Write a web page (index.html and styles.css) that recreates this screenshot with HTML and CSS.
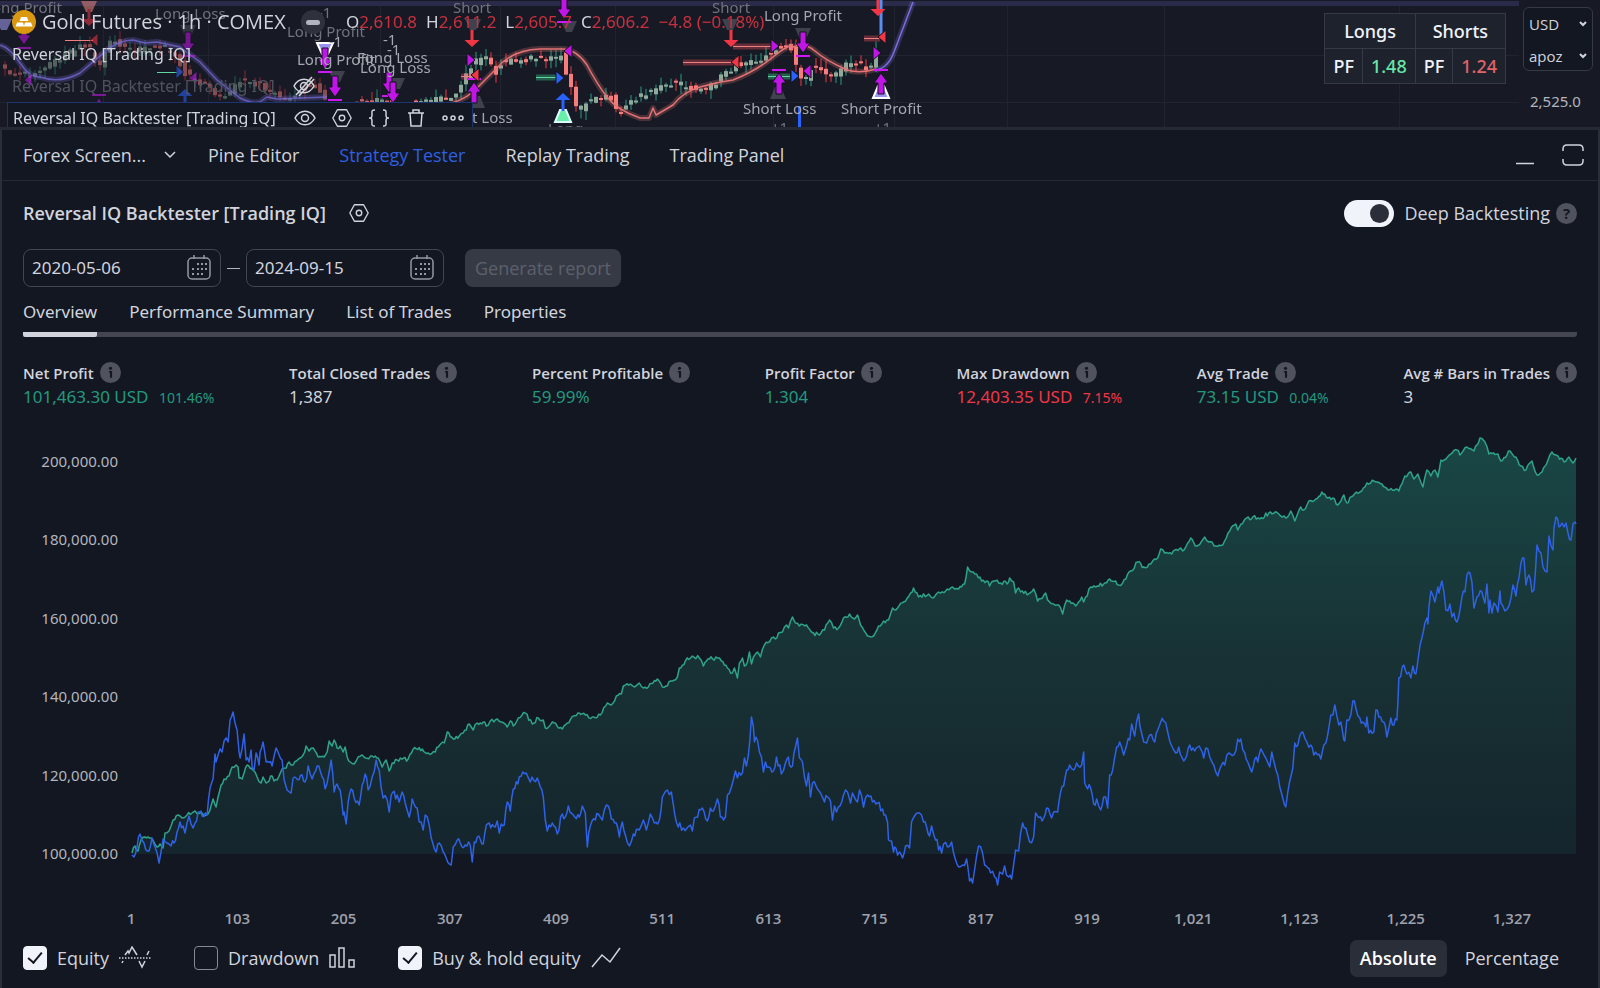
FILE: index.html
```html
<!DOCTYPE html>
<html lang="en">
<head>
<meta charset="utf-8">
<title>Strategy Tester</title>
<link rel="stylesheet" href="styles.css">
</head>
<body>
<svg class="defs" aria-hidden="true">
  <defs>
    <g id="exit-down"><path d="M-3 -22h6v11h4l-7 10-7-10h4z" fill="#c115e8" stroke="#10131c"/><path d="M-7 1h14v2h-14z" fill="#d016f5"/></g>
    <g id="exit-up"><path d="M-3 22h6v-11h4l-7-10-7 10h4z" fill="#c115e8" stroke="#10131c"/><path d="M-7 -3h14v2h-14z" fill="#d016f5"/></g>
    <path id="arrow-down" d="M-1.500 -16h3v10h6l-7.500 7-7.500-7h6z"/>
    <path id="arrow-up" d="M-1.500 18h3v-11h6l-7.500-7-7.500 7h6z"/>
    <path id="tri-left" d="M-4 0l8-7v14z" stroke="#10131c"/>
    <path id="tri-right" d="M4 0l-8-7v14z" stroke="#10131c"/>
    <path id="tag-down" d="M-8 -5h16l-5 11h-6z"/>
    <path id="tag-up" d="M-8 6h16l-5-12h-6z"/>
    <g id="hexagon" fill="none" stroke="currentColor" stroke-width="1.500"><path d="M7 3h10l5 9-5 9H7l-5-9z" stroke-linejoin="round"/><circle cx="12" cy="12" r="3"/></g>
    <g id="calendar"><rect x="2" y="3" width="22" height="21" rx="4" fill="none" stroke="currentColor" stroke-width="1.500"/><path d="M8 0v4M18 0v4" stroke="currentColor" stroke-width="1.500"/><path d="M11 8h2v2h-2zM15 8h2v2h-2zM19 8h2v2h-2zM6 13h2v2H6zM11 13h2v2h-2zM15 13h2v2h-2zM19 13h2v2h-2zM6 18h2v2H6zM11 18h2v2h-2zM15 18h2v2h-2z" fill="currentColor"/></g>
    <g id="info"><circle cx="10" cy="10" r="10" fill="#50535e"/><circle cx="10" cy="6" r="1.500" fill="#131722"/><path d="M8.500 8.500h3v6.500h-2v-5h-1z" fill="#131722"/></g>
  </defs>
</svg>

<header class="price">
  <svg class="price-chart" viewBox="0 0 1600 128" preserveAspectRatio="xMinYMin slice" aria-hidden="true">
    <rect x="0" y="1" width="1519" height="5" fill="#2a2b48"/>
    <path d="M0 55.500H1519M0 102.500H1519M103.500 6V128M208.500 6V128M380.500 6V128M500.500 6V128M615.500 6V128M773.500 6V128M894.500 6V128M1007.500 6V128M1164.500 6V128M1399.500 6V128" stroke="#20242f"/>
    <g id="candles"></g>
    <g fill="none" stroke-linejoin="round">
      <path class="ma-glow violet" d="M0 45Q10 48 20 63T40 77Q60 84 80 73L107 50Q120 40 133 40L145 43 157 42 180 47 200 62 217 80 240 98Q252 104 260 102L267 97 277 99 327 97"/>
      <path class="ma violet past" d="M0 45Q10 48 20 63T40 77Q60 84 80 73L107 50Q120 40 133 40L145 43 157 42 180 47 200 62 217 80 240 98Q252 104 260 102L267 97 277 99 327 97"/>
      <path class="ma-glow coral" d="M452 103Q468 98 477 88L497 68Q512 50 540 49H563Q577 50 587 65Q597 84 607 97T640 118H649L653 108 656 115 673 105Q683 92 700 87T733 80Q756 71 773 57T793 47Q805 42 815 51T847 70Q860 74 876 69"/>
      <path class="ma coral" d="M452 103Q468 98 477 88L497 68Q512 50 540 49H563Q577 50 587 65Q597 84 607 97T640 118H649L653 108 656 115 673 105Q683 92 700 87T733 80Q756 71 773 57T793 47Q805 42 815 51T847 70Q860 74 876 69"/>
      <path class="ma-glow violet" d="M876 70Q888 68 894 52L913 2"/>
      <path class="ma violet" d="M876 70Q888 68 894 52L913 2"/>
    </g>
    <g stroke-width="6" opacity=".35"><path d="M683 62.500h50M733 46.500h40M461 76.500h12M864 38.500h16" stroke="#f7525f"/><path d="M536 77.500h22M768 76.500h22" stroke="#3ddc97"/></g>
    <path d="M683 62.500h50M733 46.500h40M461 76.500h12M864 38.500h16M65 40.500h28" stroke="#f0807f"/><path d="M536 77.500h22M768 76.500h22M157 72.500h20" stroke="#5fd6a4"/>
    <path d="M881 0V35" stroke="#5b8def" stroke-width="3"/>
    <path d="M799.500 106V128" stroke="#2962ff" stroke-width="3"/>
    <g class="faded">
      <use href="#tag-down" x="89" y="6" fill="#e8877f"/><use href="#tag-down" x="4" y="24" fill="#a49df5"/>
      <use href="#tag-down" x="188" y="30" fill="#4a4d58"/>
      <use href="#arrow-down" x="89" y="25" fill="#f23645"/><use href="#tri-left" x="94" y="40" fill="#f23645"/>
      <use href="#exit-down" x="24" y="46"/><use href="#tri-left" x="28" y="80" fill="#c115e8"/>
      <use href="#exit-up" x="99" y="97"/><use href="#exit-down" x="188" y="54"/>
      <use href="#tri-right" x="180" y="72" fill="#2962ff"/><use href="#tri-left" x="193" y="78" fill="#c115e8"/>
      <use href="#arrow-up" x="185" y="89" fill="#2962ff"/>
    </g>
    <g fill="#4a4d58" opacity=".8"><use href="#tag-down" x="337" y="76"/><use href="#tag-down" x="397" y="83"/><use href="#tag-down" x="473" y="24"/><use href="#tag-down" x="569" y="26"/><use href="#tag-down" x="730" y="24"/><use href="#tag-down" x="803" y="33"/><use href="#tag-up" x="477" y="102"/><use href="#tag-up" x="778" y="93"/></g>
    <use href="#tag-down" x="325" y="48" fill="#9a92f0" stroke="#fff" stroke-width="2"/>
    <use href="#tag-up" x="881" y="92" fill="#9a92f0" stroke="#fff" stroke-width="2"/>
    <use href="#tag-up" x="563" y="116" fill="#69f0a8" stroke="#dff" stroke-width="2"/>
    <use href="#exit-down" x="325" y="70"/><use href="#exit-down" x="335" y="98"/><use href="#exit-down" x="389" y="94"/><use href="#exit-down" x="393" y="104"/>
    <use href="#exit-down" x="564" y="20"/><use href="#exit-down" x="803" y="54"/>
    <use href="#exit-up" x="474" y="81"/><use href="#exit-up" x="779" y="72"/><use href="#exit-up" x="881" y="72"/>
    <g fill="#f23645"><use href="#arrow-down" x="472" y="46"/><use href="#arrow-down" x="731" y="46"/><use href="#arrow-down" x="878" y="15"/><use href="#tri-left" x="475" y="75"/><use href="#tri-left" x="735" y="62"/><use href="#tri-left" x="882" y="37"/></g>
    <g fill="#c115e8"><use href="#tri-right" x="471" y="60"/><use href="#tri-left" x="568" y="51"/><use href="#tri-right" x="775" y="46"/><use href="#tri-left" x="807" y="71"/><use href="#tri-right" x="877" y="53"/></g>
    <g fill="#2962ff"><use href="#tri-right" x="560" y="78"/><use href="#tri-right" x="795" y="76"/><use href="#arrow-up" x="563" y="93"/></g>
    <g class="marks">
      <g class="dim"><text x="-8" y="13">ong Profit</text><text x="155" y="19">Long Loss</text><text x="287" y="37">Long Profit</text><text x="318" y="18">-1</text><text x="453" y="13">Short</text><text x="712" y="13">Short</text></g>
      <text x="297" y="65">Long Profit</text><text x="329" y="47">-1</text><text x="383" y="45">-1</text><text x="387" y="55">-1</text><text x="357" y="63">Fong Loss</text><text x="360" y="73">Long Loss</text>
      <text x="764" y="21">Long Profit</text><text x="743" y="114">Short Loss</text><text x="841" y="114">Short Profit</text><text x="472" y="123">t Loss</text>
      <g class="dim"><text x="548" y="134">Long</text><text x="771" y="133">+1</text><text x="874" y="133">+1</text></g>
    </g>
  </svg>

  <div class="legend">
    <div class="legend-title">
      <svg class="coin" viewBox="0 0 24 24" aria-hidden="true"><circle cx="12" cy="12" r="12" fill="#d9980f"/><path d="M9 7h6l1.500 4h-9zM5 12.500h6l1.200 4H3.500zM13 12.500h6l1.500 4h-8.700z" fill="#fff"/></svg>
      <h1>Gold Futures · 1h · COMEX</h1>
      <button class="collapse" aria-label="Collapse"></button>
      <p class="ohlc"><span>O<b>2,610.8</b></span><span>H<b>2,611.2</b></span><span>L<b>2,605.7</b></span><span>C<b>2,606.2</b></span><b>−4.8 (−0.18%)</b></p>
    </div>
    <div class="legend-row">Reversal IQ [Trading IQ]</div>
    <div class="legend-row hidden-study"><span>Reversal IQ Backtester [Trading IQ]</span>
      <svg class="i22" viewBox="0 0 22 22" fill="none" stroke="currentColor" stroke-width="1.500"><path d="M1 11c5-9 15-9 20 0-5 9-15 9-20 0z"/><circle cx="11" cy="11" r="3.500"/><path d="M3 20L19 2M6 21L21 4"/></svg></div>
    <div class="legend-row active-study"><span>Reversal IQ Backtester [Trading IQ]</span>
      <button aria-label="Hide"><svg class="i22" viewBox="0 0 22 22" fill="none" stroke="currentColor" stroke-width="1.500"><path d="M1 11c5-9 15-9 20 0-5 9-15 9-20 0z"/><circle cx="11" cy="11" r="3.500"/></svg></button>
      <button aria-label="Settings"><svg class="i22" viewBox="0 0 24 24"><use href="#hexagon"/></svg></button>
      <button aria-label="Source code"><svg class="i22" viewBox="0 0 22 22" fill="none" stroke="currentColor" stroke-width="1.500"><path d="M7 3C3 3 4 5 4 8s-1 3-3 3c2 0 3 0 3 3s-1 5 3 5M15 3c4 0 3 2 3 5s1 3 3 3c-2 0-3 0-3 3s1 5-3 5"/></svg></button>
      <button aria-label="Remove"><svg class="i22" viewBox="0 0 22 22" fill="none" stroke="currentColor" stroke-width="1.500"><path d="M3 6h16M8 6V3h6v3M5 6l1 13h10l1-13"/></svg></button>
      <button aria-label="More"><svg class="i22" viewBox="0 0 22 22" fill="none" stroke="currentColor" stroke-width="1.500"><circle cx="3" cy="11" r="2"/><circle cx="11" cy="11" r="2"/><circle cx="19" cy="11" r="2"/></svg></button>
    </div>
  </div>

  <table class="factors">
    <tr><th colspan="2">Longs</th><th colspan="2">Shorts</th></tr>
    <tr><td>PF</td><td class="gain">1.48</td><td>PF</td><td class="loss">1.24</td></tr>
  </table>

  <aside class="scale">
    <div class="units">
      <label class="pick"><select aria-label="Currency"><option>USD</option></select><svg viewBox="0 0 8 6"><path d="M1 1l3 3 3-3"/></svg></label>
      <label class="pick"><select aria-label="Unit"><option>apoz</option></select><svg viewBox="0 0 8 6"><path d="M1 1l3 3 3-3"/></svg></label>
    </div>
    <span class="tick">2,525.0</span>
  </aside>
</header>

<main class="panel">
  <nav class="tabs">
    <button class="screener">Forex Screen... <svg viewBox="0 0 12 8" fill="none" stroke="currentColor" stroke-width="1.500"><path d="M1 1l5 5 5-5"/></svg></button>
    <button>Pine Editor</button><button class="on">Strategy Tester</button><button>Replay Trading</button><button>Trading Panel</button>
    <span class="window">
      <button aria-label="Minimize"><svg viewBox="0 0 22 22"><path d="M2 19.500h18" fill="none" stroke="currentColor" stroke-width="1.500"/></svg></button>
      <button aria-label="Maximize"><svg viewBox="0 0 22 22"><path d="M1 7V5q0-4 4-4h12q4 0 4 4v2M1 15v2q0 4 4 4h12q4 0 4-4v-2" fill="none" stroke="currentColor" stroke-width="1.500"/></svg></button>
    </span>
  </nav>

  <section class="report">
    <div class="title-row">
      <h2>Reversal IQ Backtester [Trading IQ]</h2>
      <button aria-label="Strategy settings"><svg class="i22" viewBox="0 0 24 24"><use href="#hexagon"/></svg></button>
      <label class="deep"><input type="checkbox" role="switch" checked> Deep Backtesting</label>
      <span class="help">?</span>
    </div>

    <div class="range">
      <label class="date"><input type="text" value="2020-05-06" aria-label="From"><svg viewBox="0 0 26 26"><use href="#calendar"/></svg></label>
      <span class="dash"></span>
      <label class="date"><input type="text" value="2024-09-15" aria-label="To"><svg viewBox="0 0 26 26"><use href="#calendar"/></svg></label>
      <button class="generate" disabled>Generate report</button>
    </div>

    <nav class="views"><button class="on">Overview</button><button>Performance Summary</button><button>List of Trades</button><button>Properties</button></nav>

    <dl class="stats">
      <div><dt>Net Profit <svg viewBox="0 0 20 20"><use href="#info"/></svg></dt><dd class="up">101,463.30 USD <small>101.46%</small></dd></div>
      <div><dt>Total Closed Trades <svg viewBox="0 0 20 20"><use href="#info"/></svg></dt><dd>1,387</dd></div>
      <div><dt>Percent Profitable <svg viewBox="0 0 20 20"><use href="#info"/></svg></dt><dd class="up">59.99%</dd></div>
      <div><dt>Profit Factor <svg viewBox="0 0 20 20"><use href="#info"/></svg></dt><dd class="up">1.304</dd></div>
      <div><dt>Max Drawdown <svg viewBox="0 0 20 20"><use href="#info"/></svg></dt><dd class="down">12,403.35 USD <small>7.15%</small></dd></div>
      <div><dt>Avg Trade <svg viewBox="0 0 20 20"><use href="#info"/></svg></dt><dd class="up">73.15 USD <small>0.04%</small></dd></div>
      <div><dt>Avg # Bars in Trades <svg viewBox="0 0 20 20"><use href="#info"/></svg></dt><dd>3</dd></div>
    </dl>

    <div class="chart">
      <div class="y-axis"><span>200,000.00</span><span>180,000.00</span><span>160,000.00</span><span>140,000.00</span><span>120,000.00</span><span>100,000.00</span></div>
      <svg class="plot" viewBox="131 430 1445 460" preserveAspectRatio="none" role="img" aria-label="Equity curve">
        <defs><linearGradient id="fill" gradientUnits="userSpaceOnUse" x1="0" y1="438" x2="0" y2="854"><stop offset="0" stop-color="#194746"/><stop offset=".5" stop-color="#183335"/><stop offset="1" stop-color="#15252d"/></linearGradient></defs>
        <path id="area" fill="url(#fill)"/>
        <path id="equity" class="line green"/>
        <path id="hold" class="line blue"/>
      </svg>
      <div class="x-axis"><span>1</span><span>103</span><span>205</span><span>307</span><span>409</span><span>511</span><span>613</span><span>715</span><span>817</span><span>919</span><span>1,021</span><span>1,123</span><span>1,225</span><span>1,327</span></div>
    </div>

    <div class="options">
      <label><input type="checkbox" checked> Equity <svg width="32" height="24" viewBox="0 0 32 24" fill="none" stroke="currentColor" stroke-width="1.500"><path d="M0 12h32" stroke-dasharray="1.500 1.500"/><path d="M6 9l3-4 1 2 3-6 5 8M20 15l3 6 3-6M28 9l2-4M4 15l-1 2"/></svg></label>
      <label><input type="checkbox"> Drawdown <svg width="26" height="22" viewBox="0 0 26 22" fill="none" stroke="currentColor" stroke-width="1.500"><path d="M1 8h5v12H1zM10 1h5v19h-5zM20 13h5v7h-5z"/></svg></label>
      <label><input type="checkbox" checked> Buy &amp; hold equity <svg width="30" height="22" viewBox="0 0 30 22" fill="none" stroke="currentColor" stroke-width="1.500"><path d="M1 20L11 8l8 7L29 1"/></svg></label>
      <span class="modes"><button class="on">Absolute</button><button>Percentage</button></span>
    </div>
  </section>
</main>
<script src="chart.js"></script>
</body>
</html>
```
FILE: styles.css
```css
* { box-sizing: border-box; }
body { margin: 0; min-height: 100vh; background: #131722; color: #d1d4dc; font: 17px/24px "Noto Sans", "Open Sans", sans-serif; }
h1, h2, p, dl, dd { margin: 0; font-weight: 400; }
button { padding: 0; border: 0; background: none; color: inherit; font: inherit; cursor: pointer; }
svg { flex: none; display: block; }
.defs { display: block; width: 0; height: 0; position: absolute; }
.i22 { width: 22px; height: 22px; }

.price { position: relative; display: flex; justify-content: flex-end; align-items: flex-start; height: 130px; overflow: hidden; background: #171a25; border-bottom: 3px solid #252934; }
.price-chart { position: absolute; left: 0; top: 0; width: 100%; height: 128px; }
.ma { stroke-width: 1.5; }
.ma-glow { stroke-width: 6; opacity: .25; }
.violet { stroke: #7a6fe0; }
.past { opacity: .7; }
.coral { stroke: #e57373; }
.faded { opacity: .55; }
.marks { font-size: 15px; fill: #a4a7b0; }
.marks .dim { fill: #70737d; }

.legend { position: absolute; left: 0; top: 6px; }
.legend-title { display: flex; align-items: center; height: 32px; padding-left: 12px; }
.coin { width: 24px; height: 24px; margin-right: 6px; }
.legend h1 { width: 240px; font: 20px/32px "Open Sans", sans-serif; white-space: nowrap; }
.collapse { width: 24px; height: 24px; margin: 0 21px 0 19px; border-radius: 50%; background: #2f323d; display: grid; place-items: center; }
.collapse::before { content: ""; width: 14px; height: 5px; border-radius: 3px; background: #b2b5be; }
.ohlc { display: flex; gap: 9px; font-size: 17px; line-height: 32px; white-space: nowrap; }
.ohlc b { font-weight: 400; color: #c9303f; }
.legend-row { display: flex; align-items: center; height: 32px; padding-left: 12px; font-size: 16px; white-space: nowrap; }
.legend-row span { width: 281px; }
.hidden-study span { color: #50535e; }
.active-study { margin-left: 7px; padding-left: 5px; width: 466px; height: 30px; background: #131722; border: 1px solid #1c3570; border-bottom: 0; gap: 15px; }
.active-study span { width: 266px; }

.factors { position: relative; margin: 13px 17px 0 0; border-collapse: collapse; background: #1e222d; color: #f0f3fa; font-size: 18px; }
.factors th, .factors td { height: 35px; padding: 0 8px; border: 1px solid #363a45; font-weight: 500; text-align: center; }
.gain { color: #69e5a6; }
.factors .loss { color: #e06468; }
.scale { position: relative; display: grid; gap: 20px; width: 77px; }
.units { display: grid; gap: 8px; width: 70px; height: 64px; margin-top: 7px; padding: 4px 5px; border: 1px solid #363a45; border-radius: 6px; background: #131722; }
.pick { display: grid; grid-template-columns: 1fr 8px; align-items: center; }
.pick select { grid-area: 1 / 1 / 2 / 3; appearance: none; padding: 0; border: 0; background: none; color: #d1d4dc; font: 15px/24px "Open Sans", sans-serif; }
.pick svg { grid-area: 1 / 2; width: 8px; height: 6px; fill: none; stroke: #d1d4dc; stroke-width: 2; pointer-events: none; }
.tick { padding-left: 7px; color: #b2b5be; font-size: 15px; line-height: 20px; }

.panel { border: solid #2a2e39; border-width: 0 2px; background: #131722; }
.tabs { display: flex; align-items: center; gap: 40px; height: 51px; padding: 0 14px 0 21px; border-bottom: 1px solid #252934; font: 18px/24px "Open Sans", sans-serif; }
.tabs .on { color: #2f5fe0; }
.screener { display: flex; align-items: center; gap: 18px; margin-right: -8px; }
.screener svg { width: 12px; height: 8px; }
.window { display: flex; gap: 26px; margin-left: auto; }
.window svg { width: 22px; height: 22px; }

.report { padding: 20px 21px 0; }
.title-row { display: flex; align-items: center; height: 24px; font-family: "Open Sans", sans-serif; }
.title-row h2 { font-size: 18px; font-weight: 600; margin-right: 22px; }
.deep { display: flex; align-items: center; gap: 10px; margin-left: auto; font-size: 18px; }
.deep input { appearance: none; width: 50px; height: 27px; margin: 0; padding: 4px 5px; border-radius: 14px; background: #f0f3fa; }
.deep input::before { content: ""; display: block; width: 19px; height: 19px; margin-left: auto; border-radius: 50%; background: #2a2e39; }
.help { width: 21px; height: 21px; margin-left: 6px; border-radius: 50%; background: #50535e; color: #131722; font-size: 15px; line-height: 21px; font-weight: 700; text-align: center; }

.range { display: flex; align-items: center; margin-top: 24px; height: 38px; }
.date { display: flex; align-items: center; width: 198px; height: 38px; padding: 0 8px; border: 1px solid #434651; border-radius: 8px; color: #9598a1; }
.date input { flex: 1; min-width: 0; padding: 0; border: 0; outline: 0; background: none; color: #d1d4dc; font: inherit; }
.date svg { width: 26px; height: 26px; }
.dash { width: 13px; height: 1px; margin: 0 6px; background: #b2b5be; }
.generate { height: 38px; margin-left: 21px; padding: 0 10px; border-radius: 8px; background: #363a45; color: #5d606b; font: 18px/24px "Open Sans", sans-serif; cursor: default; }

.views { display: flex; gap: 32px; height: 50px; padding-top: 13px; border-bottom: 5px solid #434651; border-radius: 3px; }
.views button { display: block; height: 37px; padding-bottom: 13px; border-bottom: 5px solid transparent; }
.views .on { border-color: #d1d4dc; border-radius: 2px; }

.stats { display: flex; justify-content: space-between; padding-top: 24px; height: 93px; white-space: nowrap; }
.stats dt { display: flex; align-items: center; gap: 6px; height: 24px; font: 600 15px/24px "Open Sans", sans-serif; }
.stats dt svg { width: 21px; height: 21px; margin-bottom: 2px; }
.stats small { margin-left: 6px; font-size: 14px; }
.up { color: #22997f; }
.down { color: #f23645; }

.chart { display: grid; grid-template-columns: 95px minmax(0, 1fr); column-gap: 13px; }
.y-axis { display: flex; flex-direction: column; justify-content: space-between; padding: 21px 0 27px; font-size: 15px; line-height: 20px; text-align: right; color: #b2b5be; }
.plot { width: 100%; height: 460px; }
.line { fill: none; stroke-width: 1.5; stroke-linejoin: round; }
.green { stroke: #2fa38a; }
.blue { stroke: #2f62e6; }
.x-axis { grid-column: 1 / 3; display: grid; grid-template-columns: repeat(14, 1fr); margin: 18px 12px 0 55px; font: 600 15px/20px "Open Sans", sans-serif; color: #9fa2ac; text-align: center; }

.options { display: flex; align-items: center; gap: 43px; height: 60px; font: 18px/24px "Open Sans", sans-serif; }
.options label { display: flex; align-items: center; gap: 10px; }
.options input { appearance: none; display: grid; place-items: center; width: 24px; height: 24px; margin: 0; border: 1px solid #868993; border-radius: 4px; }
.options input:checked { background: #f0f3fa; border-color: #f0f3fa; }
.options input:checked::before { content: ""; width: 12px; height: 6px; margin-bottom: 4px; border: solid #131722; border-width: 0 0 2px 2px; rotate: -50deg; }
.modes { display: flex; gap: 8px; margin-left: auto; margin-right: 8px; }
.modes button { height: 37px; padding: 0 10px; border-radius: 7px; }
.modes .on { background: #2a2e39; color: #fff; font-weight: 600; }
```
FILE: chart.js
```js
const equity = `132,853 135,846 138,851 141,840 145,837 148,837 153,840 157,847 160,844 163,848 165,833 169,831 173,820 178,815 182,818 187,815 192,813 195,811 200,813 204,816 208,814 213,799 216,807 218,797 221,785 224,779 229,776 232,767 236,765 238,767 239,778 242,779 244,773 247,765 250,768 254,771 257,777 261,783 263,777 266,783 272,776 274,781 277,780 282,769 286,768 289,762 293,765 300,758 303,755 306,746 309,751 313,748 318,757 324,757 327,752 329,741 332,746 334,740 337,748 340,746 343,752 345,747 347,757 350,762 354,764 358,757 362,755 365,758 372,756 378,758 382,767 386,760 389,771 392,763 397,760 408,759 413,749 422,749 428,753 435,752 438,747 444,743 447,732 453,739 459,736 463,733 469,724 473,730 477,723 483,722 486,726 490,721 497,719 501,722 507,727 510,721 513,726 518,718 525,713 532,724 538,718 543,720 545,728 552,722 562,729 567,723 573,716 579,713 585,715 592,717 600,715 607,703 611,705 616,696 621,694 623,686 630,684 634,687 639,683 643,688 648,687 657,679 662,687 667,686 670,681 677,677 679,668 685,661 692,656 699,658 703,666 709,659 717,658 721,661 727,668 732,673 734,668 737,678 739,663 742,658 744,666 747,662 749,652 751,664 753,657 757,652 760,657 764,645 771,638 775,639 778,633 782,632 786,625 788,628 792,617 795,623 799,626 806,625 811,632 813,633 819,635 824,630 829,620 833,628 838,628 843,618 849,614 854,619 857,615 860,625 867,636 873,636 878,626 883,621 888,620 892,608 897,608 903,602 910,593 913,588 918,597 928,594 932,598 938,592 945,591 952,587 954,589 958,589 964,584 967,567 971,572 976,574 981,581 986,581 989,586 993,581 1000,583 1008,582 1009,578 1013,582 1015,593 1018,588 1020,592 1028,594 1033,589 1037,601 1045,593 1047,600 1053,604 1058,605 1062,614 1066,600 1075,606 1081,597 1083,602 1090,587 1103,584 1109,579 1115,581 1118,585 1122,583 1130,571 1137,562 1143,567 1150,564 1157,558 1160,549 1164,553 1171,554 1180,548 1182,551 1190,538 1196,546 1204,537 1208,542 1215,546 1222,545 1229,531 1235,524 1237,530 1243,521 1252,517 1259,519 1268,513 1278,514 1285,518 1290,511 1294,521 1300,507 1303,510 1308,501 1315,499 1321,492 1327,498 1332,498 1337,505 1343,495 1346,503 1352,496 1359,492 1366,483 1373,481 1381,484 1387,490 1395,489 1398,491 1404,476 1410,472 1413,479 1417,474 1422,487 1426,470 1430,476 1434,470 1437,477 1440,460 1445,459 1450,454 1456,450 1459,455 1466,447 1473,451 1476,445 1479,438 1484,442 1488,454 1497,454 1500,461 1509,451 1515,457 1520,466 1525,470 1531,461 1536,475 1541,472 1547,460 1551,452 1557,456 1563,462 1568,457 1572,463 1575,458`;

const hold = `132,855 134,857 137,847 140,834 144,843 149,851 152,838 155,847 159,863 163,839 167,843 171,846 174,843 177,832 180,822 183,826 185,833 189,816 193,828 195,823 198,812 201,811 202,816 207,815 210,788 213,779 215,754 216,762 220,749 222,752 224,741 228,742 230,720 233,712 237,730 239,752 240,758 244,734 246,760 249,762 251,750 252,767 254,770 256,753 259,765 260,752 263,742 266,762 272,766 276,748 279,755 282,760 284,780 287,790 291,793 293,778 302,775 305,782 308,766 312,779 317,766 322,777 325,789 329,772 331,760 334,792 337,784 340,790 343,815 344,812 346,824 348,802 351,789 354,798 359,805 362,785 365,774 368,790 372,777 376,760 379,770 383,798 387,800 389,812 391,795 397,795 399,802 402,792 405,803 409,817 412,799 417,808 419,822 423,830 425,815 429,825 431,838 436,852 439,843 443,852 446,858 451,865 453,847 457,840 460,843 470,845 472,862 474,842 477,837 483,844 486,825 489,823 495,827 497,821 499,833 501,824 504,825 507,802 510,811 513,789 519,777 526,773 530,782 537,778 540,787 543,797 545,820 547,831 552,823 557,834 562,814 565,817 568,806 573,815 579,817 582,806 585,813 587,847 590,826 595,820 598,814 602,820 604,810 608,806 611,819 616,823 619,837 622,822 625,835 629,846 633,834 639,830 643,820 646,830 650,814 654,823 659,820 662,797 667,790 671,792 673,805 676,822 683,828 690,825 692,831 694,818 702,808 707,821 710,808 713,811 717,799 720,817 723,820 725,817 727,795 731,787 735,771 737,778 742,773 744,758 746,766 748,755 751,717 753,727 754,742 757,740 759,752 761,757 763,772 765,762 773,771 776,757 781,774 785,763 788,757 789,765 792,766 795,747 797,738 799,758 802,762 804,777 806,786 808,773 810,797 812,783 817,789 824,802 827,797 830,801 832,820 834,806 836,812 843,795 847,792 850,803 852,793 857,802 859,790 863,807 867,795 872,802 877,803 882,809 885,815 887,822 888,840 891,841 893,852 894,847 897,855 899,852 902,858 905,846 909,848 911,822 914,816 919,813 923,822 929,836 931,826 935,840 941,853 943,844 947,847 951,842 953,853 958,867 962,865 966,859 967,865 969,881 972,883 974,870 978,846 982,853 984,865 990,873 994,877 997,885 999,872 1002,874 1004,866 1008,877 1011,879 1013,865 1015,850 1018,851 1020,833 1022,823 1027,835 1029,842 1033,837 1035,813 1040,817 1043,818 1046,808 1051,818 1053,812 1057,812 1060,792 1063,786 1066,770 1069,765 1073,770 1076,763 1081,765 1083,752 1084,783 1087,789 1090,788 1093,804 1096,799 1100,810 1103,797 1105,797 1107,808 1109,775 1112,770 1116,747 1119,742 1123,755 1126,745 1129,740 1131,724 1134,736 1138,714 1139,725 1143,742 1146,743 1149,735 1154,742 1157,730 1160,722 1163,721 1167,732 1171,746 1175,753 1178,747 1183,761 1189,745 1194,751 1197,747 1203,758 1205,748 1209,757 1213,765 1217,776 1219,769 1224,765 1228,753 1235,751 1237,739 1240,739 1244,753 1247,762 1251,772 1254,759 1257,762 1260,749 1265,758 1269,767 1271,752 1274,765 1277,775 1279,787 1282,798 1285,807 1287,792 1290,777 1292,768 1294,743 1297,745 1302,732 1306,742 1310,745 1313,755 1320,759 1323,745 1325,743 1328,728 1330,715 1332,715 1334,705 1338,725 1340,722 1343,740 1344,741 1346,720 1350,715 1352,701 1355,708 1359,718 1365,727 1366,717 1368,733 1373,732 1375,710 1378,717 1383,722 1386,737 1390,718 1393,725 1396,720 1397,703 1398,678 1403,665 1406,674 1410,678 1412,666 1415,674 1418,653 1421,638 1424,623 1426,618 1427,624 1428,607 1430,591 1434,602 1437,587 1438,593 1441,581 1443,592 1445,610 1449,604 1451,617 1453,613 1456,622 1461,597 1464,592 1466,575 1469,573 1471,582 1473,608 1476,597 1481,592 1484,603 1486,584 1488,613 1489,600 1491,613 1493,603 1497,612 1499,591 1500,603 1504,611 1508,606 1512,585 1515,596 1518,578 1520,563 1523,558 1525,585 1528,575 1531,592 1533,590 1536,545 1540,553 1542,567 1546,572 1548,536 1552,550 1553,528 1555,517 1558,527 1561,523 1563,527 1565,523 1567,533 1570,540 1572,524 1574,522 1575,524`;

const parse = text => text.split(' ').map(pair => pair.split(',').map(Number));

let seed = 7;
const random = () => (seed = (seed * 16807) % 2147483647) / 2147483647;

function trace(text, spread) {
  const points = parse(text);
  let d = 'M' + points[0];
  for (let i = 1; i < points.length; i++) {
    const [x0, y0] = points[i - 1];
    const [x1, y1] = points[i];
    const steps = Math.floor((x1 - x0) / 1.5);
    for (let s = 1; s < steps; s++) {
      const t = s / steps;
      d += `L${(x0 + (x1 - x0) * t).toFixed(1)} ${(y0 + (y1 - y0) * t + (random() - 0.5) * spread).toFixed(1)}`;
    }
    d += `L${x1} ${y1}`;
  }
  return d;
}

const equityPath = trace(equity, 4);
document.getElementById('equity').setAttribute('d', equityPath);
document.getElementById('area').setAttribute('d', equityPath + 'V854H132Z');
document.getElementById('hold').setAttribute('d', trace(hold, 8));

const sessions = [
  ['3,67 15,72 30,75 50,66 60,60 75,52 85,45 95,50 101,72 110,45 120,42 135,50 160,48 172,48 180,56 187,72 195,78 210,85 225,99 245,80 265,85 275,92 290,99 315,82 325,95 333,100', 0.5],
  ['355,101 400,100', 0.8], ['414,100 440,99 455,98 463,88 470,75 475,63 490,58 497,75 505,62 530,60 540,55 557,60 565,52 568,76 575,85 580,113 590,100 605,98 615,98 620,114 632,105 645,95 660,90 675,83 690,85 700,92 715,85 725,76 740,65 760,60 775,50 785,45 797,52 801,79 810,80 815,65 830,75 840,73 852,62 865,65 872,72 880,45', 1],
];
let marks = '';
for (const [text, opacity] of sessions) {
  const points = parse(text);
  const at = x => {
    const i = Math.max(1, points.findIndex(p => p[0] >= x));
    const [[x0, y0], [x1, y1]] = [points[i - 1], points[i]];
    return y0 + (y1 - y0) * (x - x0) / (x1 - x0);
  };
  const end = points[points.length - 1][0];
  marks += `<g opacity="${opacity}">`;
  for (let x = points[0][0]; x + 5 < end; x += 5) {
    const open = at(x) + (random() - 0.5) * 7;
    const close = at(x + 5) + (random() - 0.5) * 7;
    const top = Math.min(open, close), height = Math.max(2, Math.abs(open - close));
    const up = close < open;
    const high = top - random() * 9, low = top + height + random() * 9;
    marks += `<path d="M${x + 2} ${high.toFixed(1)}V${low.toFixed(1)}" stroke="${up ? '#2a9d83' : '#f23645'}"/>`
      + `<rect x="${x}" y="${top.toFixed(1)}" width="4" height="${height.toFixed(1)}" fill="${up ? '#8fa99a' : '#f77c7c'}"/>`;
  }
  marks += '</g>';
}
document.getElementById('candles').innerHTML = marks;
```
